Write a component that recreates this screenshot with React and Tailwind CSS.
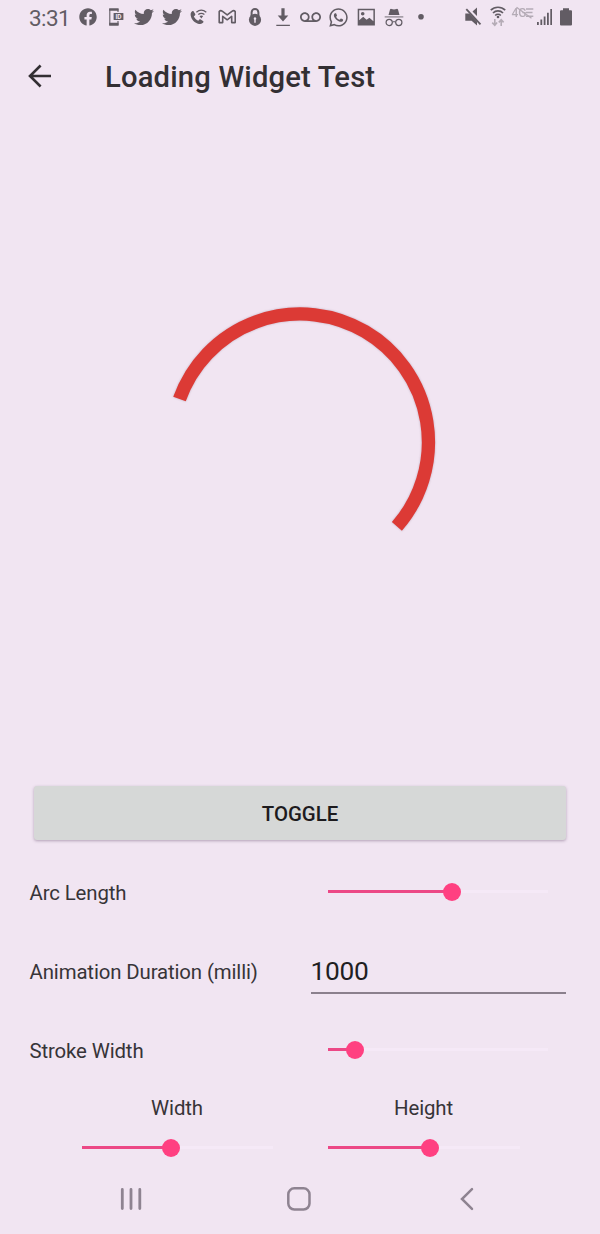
import { FaFacebook, FaTwitter, FaWhatsapp } from "react-icons/fa";
import { MdVoicemail } from "react-icons/md";

function Cell({ children }) {
  return <div className="flex h-6 w-[27.75px] shrink-0 items-center justify-center">{children}</div>;
}

function Glyph({ children }) {
  return (
    <Cell>
      <svg width="20" height="20" viewBox="0 0 20 20" fill="none" stroke="none">
        {children}
      </svg>
    </Cell>
  );
}

function StatusBar() {
  return (
    <div className="flex h-[34px] items-center pl-[29px] text-[#625c64]">
      <div className="w-[45.6px] shrink-0 whitespace-nowrap pt-[2px] text-[22.5px] leading-6 tracking-[-0.55px]">3:31</div>
      <Cell><FaFacebook size={18} /></Cell>
      <Glyph>
        <path d="M12 5V2H3.8v16H12v-4" stroke="currentColor" strokeWidth="1.1" />
        <path d="M3.2 1.4h9.3v2.4H3.2zM3.2 15.8h9.3v2.7H3.2z" fill="currentColor" />
        <rect x="7.6" y="6" width="9.8" height="7" rx="0.6" fill="currentColor" />
        <text x="12.5" y="11.8" textAnchor="middle" fontSize="6.5" fontWeight="700" fill="#f1e5f2">ID</text>
      </Glyph>
      <Cell><FaTwitter size={20} /></Cell>
      <Cell><FaTwitter size={20} /></Cell>
      <Glyph>
        <path d="M3.2 4.2c-1.3.8-1.8 2.2-1.5 4.2.7 4 4 7.6 8.2 8.5 2 .4 3.4-.1 4.300-1.300.5-.7.3-1.200-.2-1.600l-2.300-1.500c-.6-.4-1.100-.3-1.500.2l-.9 1c-2-.9-3.600-2.500-4.500-4.500l1.100-.8c.5-.4.6-.9.3-1.500L4.700 4.500c-.4-.6-.9-.6-1.500-.3Z" fill="currentColor" />
        <path d="M7.4 5.2q4.800-4 9.900 0M9.300 7.600q3-2.400 6.100 0" stroke="currentColor" strokeWidth="1.3" />
        <path d="m10.5 9.100q1.900-1.200 3.700 0l-1.900 2.300z" fill="currentColor" />
      </Glyph>
      <Glyph>
        <path d="M2.200 4.600v11h3.500V9.400l4.500 3.400 4.500-3.400v6.200h3.500v-11q-1.300-1.700-3.300-.3l-4.700 3.600-4.700-3.600q-2-1.400-3.300.3Z" stroke="currentColor" strokeWidth="1.6" strokeLinejoin="round" />
      </Glyph>
      <Glyph>
        <path d="M6.600 9V5.400a3.400 3.400 0 0 1 6.800 0V9" stroke="currentColor" strokeWidth="2" />
        <circle cx="10" cy="12.8" r="6.1" fill="currentColor" />
        <path d="M10 10.200a1.400 1.400 0 0 1 .7 2.500v3H9.300v-3A1.400 1.400 0 0 1 10 10.200Z" fill="#f1e5f2" />
      </Glyph>
      <Glyph>
        <path d="M8.400 1.200h3.200v7.200h3.700L10 14.600 4.700 8.400h3.700zM3.300 17.700h13.600v1.400H3.300z" fill="currentColor" />
      </Glyph>
      <Cell><MdVoicemail size={21} /></Cell>
      <Cell><FaWhatsapp size={21} /></Cell>
      <Glyph>
        <path fillRule="evenodd" d="M1.700 1.700h17.200v16.800H1.700zM3.200 3.200v10l4-3.400 3.400 3 2.800-2 4 3.400v-11z" fill="currentColor" />
        <circle cx="6.7" cy="6.8" r="1.8" fill="currentColor" />
      </Glyph>
      <Glyph>
        <path d="M4.500 8.100 6 2.600q.4-1 1.500-.7l2.500.5 2.500-.5q1.100-.3 1.500.7l1.500 5.500z" fill="currentColor" />
        <path d="M.7 9.300h18.600v1.200H.7z" fill="currentColor" opacity="0.75" />
        <circle cx="5.2" cy="15.5" r="3.1" stroke="currentColor" strokeWidth="1.2" />
        <circle cx="14.8" cy="15.5" r="3.1" stroke="currentColor" strokeWidth="1.2" />
        <path d="M8.200 15.200q1.800-1.200 3.600 0" stroke="currentColor" />
      </Glyph>
      <Glyph><circle cx="10" cy="9.8" r="2.8" fill="currentColor" /></Glyph>
      <svg className="ml-[27.6px] shrink-0" width="20" height="24" viewBox="463 5 20 24" fill="none">
        <path d="M465.300 13.500h4l7.700 8v4l-5.400-4.700h-6.300zM472.500 11.500l4.500-4v8.500z" fill="currentColor" />
        <path d="m466.300 9.200 14.200 15.200" stroke="currentColor" strokeWidth="1.8" />
      </svg>
      <svg className="ml-[6px] shrink-0" width="18" height="24" viewBox="489 5 18 24" fill="none" stroke="currentColor">
        <path d="M490.800 10.200a10.300 10.300 0 0 1 14.400 0M493 13a7 7 0 0 1 10 0M495.200 15.500a4 4 0 0 1 5.600 0" strokeWidth="1.7" />
        <circle cx="498" cy="17" r="1.3" fill="currentColor" stroke="none" />
        <path d="M494.800 19v6.300m-2.500-2.700 2.500 2.700 2.300-2.700M501.200 26v-6.300m-2.400 2.700 2.400-2.700 2.400 2.700" strokeWidth="1.6" opacity="0.42" />
      </svg>
      <svg className="ml-[4px] shrink-0" width="24" height="24" viewBox="511 5 24 24" fill="none" stroke="currentColor" opacity="0.42">
        <text x="511.5" y="16.6" fontSize="12" fontWeight="500" fill="currentColor" stroke="none">4G</text>
        <path d="M526 9h7.300M526 12.500h6.500M526 16.200h7.300" strokeWidth="1.6" />
        <path d="m516.500 7.300 15 11" strokeWidth="1.3" />
      </svg>
      <svg className="ml-[1px] shrink-0" width="18" height="24" viewBox="536 5 18 24" fill="currentColor">
        <path d="M537 22h1.800v3H537zM540.400 19.500h1.800V25h-1.800zM543.700 16.400h1.800V25h-1.800zM547 12.700h1.800V25H547zM550.300 9h1.700v16h-1.700z" />
      </svg>
      <svg className="ml-[4px] shrink-0" width="16" height="24" viewBox="558 5 16 24" fill="currentColor">
        <path d="M563 8.200h6v2h2q1 0 1 1v13.400q0 1-1 1h-10q-1 0-1-1V11.200q0-1 1-1h2z" />
      </svg>
    </div>
  );
}

function Slider({ width, value }) {
  return (
    <div className={`flex h-[18px] items-center ${width}`}>
      <div className="-mt-px -mr-[9px] h-[3px] bg-[#ec4886]" style={{ width: value }} />
      <div className="size-[18px] shrink-0 rounded-full bg-[#ff4081]" />
      <div className="-mt-px h-[3px] flex-1 bg-[#f5e9f7]" />
    </div>
  );
}

export default function App() {
  return (
    <div className="flex h-[1234px] w-[600px] flex-col overflow-hidden bg-[#f1e5f2] font-['Roboto',sans-serif] text-[20.4px] leading-6 tracking-[-0.13px] text-[#373438]">
      <StatusBar />
      <header className="flex h-[86px] items-center pl-[27px]">
        <svg className="-mt-[2px]" width="26" height="26" viewBox="0 0 26 26" fill="none" stroke="#332f33" strokeWidth="2.6">
          <path d="M24 13H3M13.600 2.500 3 13l10.600 10.500" />
        </svg>
        <h1 className="pl-[52px] text-[29.2px] font-medium leading-9 tracking-[0.18px] text-[#332f33]">Loading Widget Test</h1>
      </header>
      <main className="flex flex-1 flex-col">
        <div className="flex h-[644px] items-center justify-center">
          <svg width="290" height="290" viewBox="155 297 290 290" fill="none" className="drop-shadow-[0_0_1px_rgba(80,50,80,0.3)]">
            <path d="M179.500 399.100A128.200 128.200 0 1 1 396.900 526.400" stroke="#dc3a35" strokeWidth="13.3" />
          </svg>
        </div>
        <button className="mx-[34px] mt-[22px] h-[54px] shrink-0 rounded-[3px] bg-[#d6d8d7] pt-[2px] font-medium tracking-normal text-[#1d1b1e] shadow-[0_1px_3px_rgba(60,30,70,0.35)]">TOGGLE</button>
        <div className="mt-[12px] flex h-[79px] items-center pl-[29.5px]">
          <div className="w-[298.5px] pt-[2px]">Arc Length</div>
          <Slider width="w-[220px]" value={124} />
        </div>
        <div className="flex h-[79px] items-center pl-[29.5px]">
          <div className="w-[281px] pt-[2px]">Animation Duration (milli)</div>
          <div className="mt-[9px] h-[38px] w-[255.5px] border-b-2 border-[#8b808d] text-[26.3px] leading-[30px] tracking-[-0.3px] text-[#211e22]">1000</div>
        </div>
        <div className="flex h-[79px] items-center pl-[29.5px]">
          <div className="w-[298.5px] pt-[2px]">Stroke Width</div>
          <Slider width="w-[220px]" value={26.5} />
        </div>
        <div className="flex pt-[7px] pl-[82px]">
          <div className="flex w-[246px] flex-col gap-[19px]">
            <div className="w-[190px] text-center">Width</div>
            <Slider width="w-[191px]" value={89} />
          </div>
          <div className="flex flex-col gap-[19px]">
            <div className="w-[191px] text-center">Height</div>
            <Slider width="w-[192px]" value={102} />
          </div>
        </div>
      </main>
      <nav className="flex h-[71px] shrink-0 items-center pl-[119px] text-[#8e8391]">
        <svg width="24" height="24" viewBox="0 0 24 24" stroke="currentColor" strokeWidth="2.8" strokeLinecap="round">
          <path d="M3.300 2.400v19.200M12 2.400v19.200M20.800 2.400v19.200" />
        </svg>
        <svg className="ml-[143px]" width="26" height="26" viewBox="0 0 26 26" fill="none" stroke="currentColor" strokeWidth="2.5">
          <rect x="2.3" y="2.300" width="21.2" height="21.2" rx="6" />
        </svg>
        <svg className="ml-[147px]" width="16" height="26" viewBox="0 0 16 26" fill="none" stroke="currentColor" strokeWidth="2.5" strokeLinecap="round">
          <path d="M13 3.200 3 13l10 9.800" />
        </svg>
      </nav>
    </div>
  );
}
